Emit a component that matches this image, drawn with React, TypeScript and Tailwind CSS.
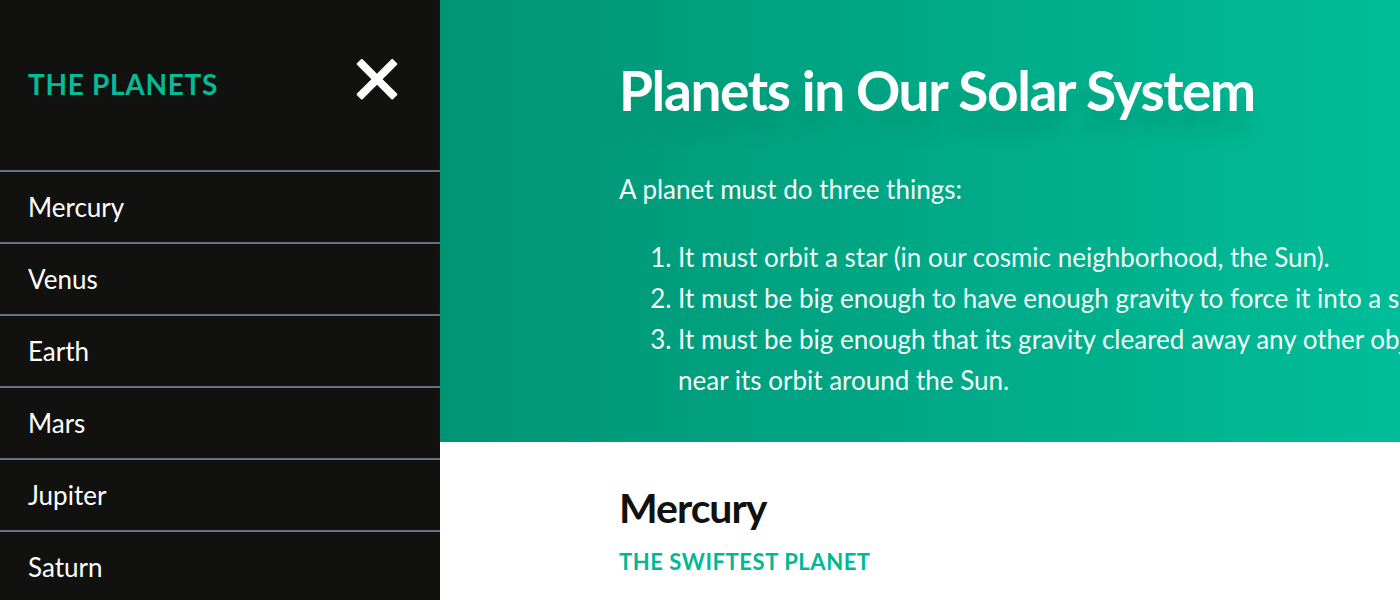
const planets = ["Mercury", "Venus", "Earth", "Mars", "Jupiter", "Saturn"];

export default function App() {
  return (
    <div className="flex h-screen overflow-hidden bg-white font-['Lato',sans-serif] text-[#111210]">
      <nav aria-label="Planets" className="w-[440px] shrink-0 bg-[#111210] text-white">
        <div className="flex items-start justify-between pt-[58px] pr-[42px] pb-[68px] pl-7">
          <h2 className="pt-2 text-[28px] leading-9 font-bold tracking-wide text-[#00bc97] uppercase">The Planets</h2>
          <button type="button" aria-label="Close menu" className="size-[42px]">
            <svg viewBox="0 0 42 42" className="size-full" fill="currentColor">
              <path d="M5 1.2 Q5.8 .4 6.6 1.2 L21 15.8 L35.4 1.2 Q36.2 .4 37 1.2 L41 5.2 Q41.8 6 41 6.8 L26.6 21.2 L41 35.6 Q41.8 36.4 41 37.2 L37 41.2 Q36.2 42 35.4 41.2 L21 26.8 L6.6 41.2 Q5.8 42 5 41.2 L1 37.2 Q.2 36.4 1 35.6 L15.4 21.2 L1 6.8 Q.2 6 1 5.2 Z" />
            </svg>
          </button>
        </div>
        <ul>
          {planets.map((name) => (
            <li key={name} className="border-t-2 border-[#637384]">
              <a href={`#${name}`} className="block px-7 py-[17px] text-[26px] leading-9">{name}</a>
            </li>
          ))}
        </ul>
      </nav>
      <main className="min-w-0 flex-1">
        <header className="bg-linear-to-r from-[#009474] to-[#00bd99] pt-[54px] pb-[41px] pl-[179px] text-white">
          <h1 className="text-[55px] leading-[72px] font-bold tracking-tight whitespace-nowrap [text-shadow:-6px_20px_16px_#00936f99]">Planets in Our Solar System</h1>
          <p className="mt-[43px] text-[26px] leading-10 text-[#f2fbf8]">A planet must do three things:</p>
          <ol className="mt-7 list-decimal pl-[59px] text-[26px] leading-[41px] whitespace-nowrap text-[#f2fbf8]">
            <li>It must orbit a star (in our cosmic neighborhood, the Sun).</li>
            <li>It must be big enough to have enough gravity to force it into a spherical shape.</li>
            <li>It must be big enough that its gravity cleared away any other objects of a similar size<br />near its orbit around the Sun.</li>
          </ol>
        </header>
        <section id="Mercury" className="pt-[39px] pl-[179px]">
          <h2 className="text-[41px] leading-[54px] font-bold tracking-tight">Mercury</h2>
          <p className="mt-[11px] text-[22px] leading-8 font-bold tracking-wide text-[#00b894] uppercase">The Swiftest Planet</p>
        </section>
      </main>
    </div>
  );
}
